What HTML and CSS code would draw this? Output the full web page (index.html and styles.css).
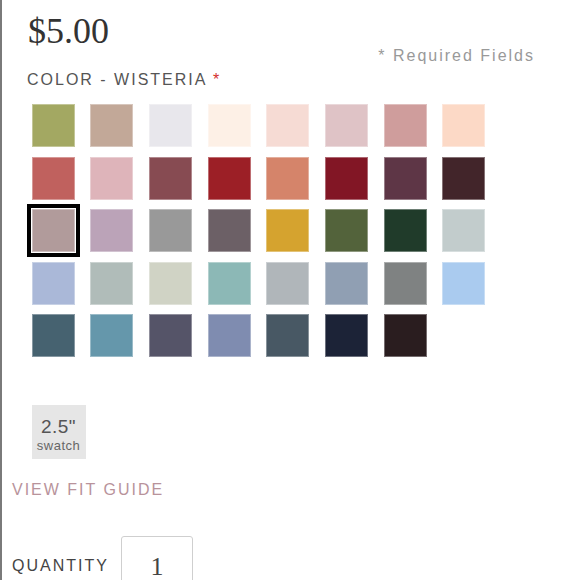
FILE: index.html
```html
<!DOCTYPE html>
<html lang="en">
<head>
<meta charset="utf-8">
<title>Product options</title>
<link rel="stylesheet" href="styles.css">
</head>
<body>
<div class="page">
  <div class="head">
    <div class="price">$5.00</div>
    <div class="required">* Required Fields</div>
  </div>
  <div class="label">COLOR - WISTERIA <span class="star">*</span></div>
  <div class="grid">
    <div class="swatch" style="background:#a3a862"></div>
    <div class="swatch" style="background:#c2a898"></div>
    <div class="swatch" style="background:#e8e7ec"></div>
    <div class="swatch" style="background:#fdf0e6"></div>
    <div class="swatch" style="background:#f6dbd4"></div>
    <div class="swatch" style="background:#dfc3c6"></div>
    <div class="swatch" style="background:#cf9d9c"></div>
    <div class="swatch" style="background:#fcd9c6"></div>

    <div class="swatch" style="background:#c0615e"></div>
    <div class="swatch" style="background:#deb4ba"></div>
    <div class="swatch" style="background:#874b52"></div>
    <div class="swatch" style="background:#9c1f26"></div>
    <div class="swatch" style="background:#d5846a"></div>
    <div class="swatch" style="background:#821625"></div>
    <div class="swatch" style="background:#5e3646"></div>
    <div class="swatch" style="background:#42252a"></div>

    <div class="swatch selected" style="background:#b19b9b"></div>
    <div class="swatch" style="background:#bba3b8"></div>
    <div class="swatch" style="background:#999999"></div>
    <div class="swatch" style="background:#6c6066"></div>
    <div class="swatch" style="background:#d5a32f"></div>
    <div class="swatch" style="background:#53633b"></div>
    <div class="swatch" style="background:#203b2a"></div>
    <div class="swatch" style="background:#c2cccc"></div>

    <div class="swatch" style="background:#aab8d8"></div>
    <div class="swatch" style="background:#b0bcb9"></div>
    <div class="swatch" style="background:#d0d3c5"></div>
    <div class="swatch" style="background:#8cb8b6"></div>
    <div class="swatch" style="background:#b0b6ba"></div>
    <div class="swatch" style="background:#909fb3"></div>
    <div class="swatch" style="background:#7f8282"></div>
    <div class="swatch" style="background:#aacbef"></div>

    <div class="swatch" style="background:#466270"></div>
    <div class="swatch" style="background:#6597ab"></div>
    <div class="swatch" style="background:#555468"></div>
    <div class="swatch" style="background:#7f8cb0"></div>
    <div class="swatch" style="background:#485864"></div>
    <div class="swatch" style="background:#1c2337"></div>
    <div class="swatch" style="background:#2a1d1f"></div>
  </div>
  <div class="sample">
    <div class="sample-size">2.5"</div>
    <div class="sample-word">swatch</div>
  </div>
  <a class="fit" href="#">VIEW FIT GUIDE</a>
  <div class="qty">
    <span class="qty-label">QUANTITY</span>
    <input class="qty-input" type="text" value="1">
  </div>
</div>
</body>
</html>
```

FILE: styles.css
```css
html, body {
  margin: 0;
  padding: 0;
  background: #fff;
}

body {
  font-family: "Liberation Sans", Arial, sans-serif;
  overflow: hidden;
}

.page {
  border-left: 2px solid #7a7a7a;
  min-height: 580px;
  box-sizing: border-box;
  padding: 13px 0 0 10px;
}

.head {
  display: flex;
  justify-content: space-between;
  align-items: flex-start;
}

.price {
  font-family: "Liberation Serif", "Times New Roman", serif;
  font-size: 36px;
  line-height: 36px;
  color: #333;
  margin-left: 16px;
}

.required {
  margin-top: 34px;
  margin-right: 45px;
  font-size: 16px;
  line-height: 18px;
  letter-spacing: 2px;
  color: #999;
}

.label {
  margin-top: 6px;
  margin-left: 15px;
  font-size: 16px;
  line-height: 18px;
  letter-spacing: 2px;
  color: #555;
}

.star {
  color: #d4302c;
}

.grid {
  margin-top: 15px;
  margin-left: 19.5px;
  display: grid;
  grid-template-columns: repeat(8, 43px);
  grid-auto-rows: 43px;
  column-gap: 15.7px;
  row-gap: 9.5px;
}

.swatch {
  box-sizing: border-box;
  border: 1px solid rgba(255, 255, 255, 0.35);
}

.swatch.selected {
  outline: 4px solid #000;
  outline-offset: 1px;
}

.sample {
  margin-top: 48px;
  margin-left: 19.5px;
  width: 54px;
  height: 54px;
  box-sizing: border-box;
  padding-top: 12px;
  background: #e6e6e6;
  text-align: center;
  color: #555;
}

.sample-size {
  font-size: 19px;
  line-height: 20px;
  letter-spacing: 0.5px;
}

.sample-word {
  margin-top: 2px;
  font-size: 13px;
  line-height: 14px;
  letter-spacing: 0.5px;
  color: #666;
}

.fit {
  display: block;
  margin-top: 21.7px;
  font-size: 16px;
  line-height: 18px;
  letter-spacing: 2px;
  color: #b8939b;
  text-decoration: none;
}

.qty {
  margin-top: 37.3px;
  display: flex;
  align-items: flex-start;
  gap: 12px;
}

.qty-label {
  margin-top: 20.7px;
  font-size: 16px;
  line-height: 18px;
  letter-spacing: 2px;
  color: #444;
}

.qty-input {
  box-sizing: border-box;
  width: 72px;
  height: 62px;
  margin: 0;
  padding: 0;
  border: 1px solid #cfcfcf;
  border-radius: 3px;
  font-family: "Liberation Serif", "Times New Roman", serif;
  font-size: 26px;
  color: #444;
  text-align: center;
  background: #fff;
}
```
